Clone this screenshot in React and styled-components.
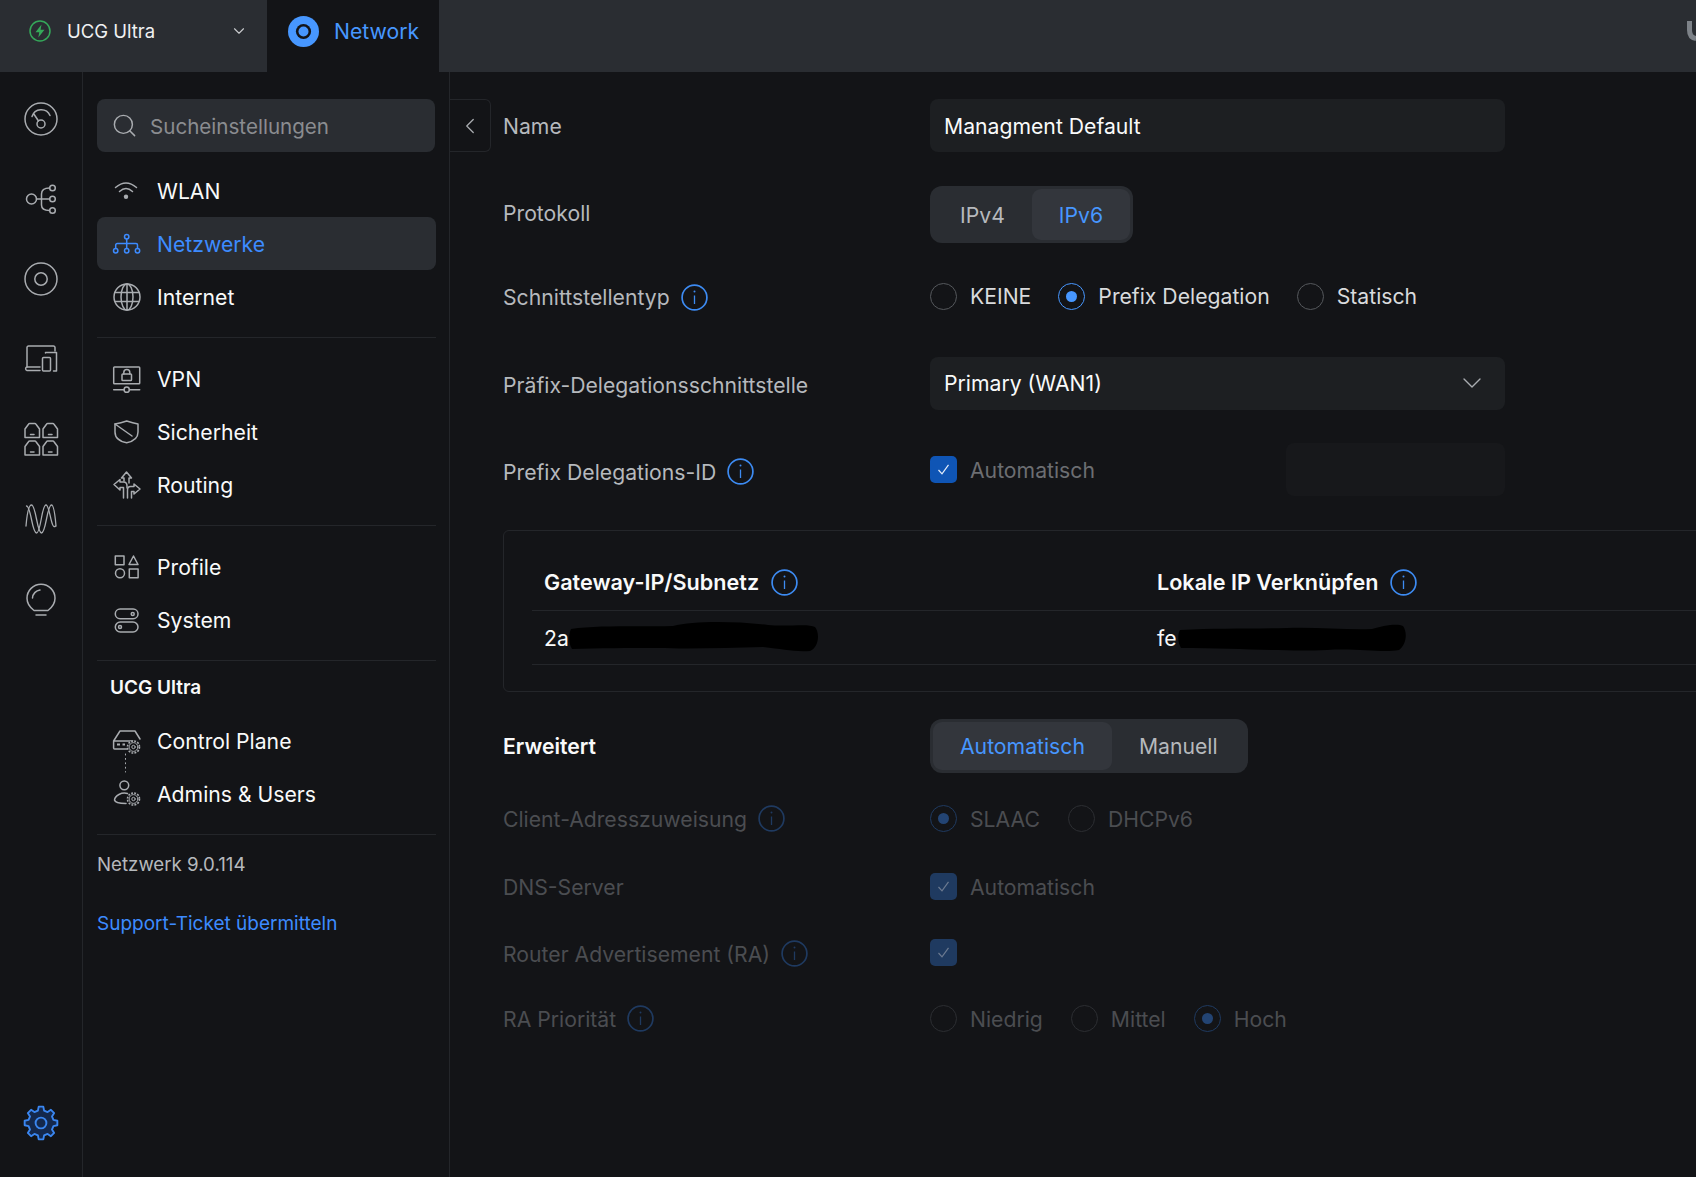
import React from "react";
import styled, { createGlobalStyle } from "styled-components";
import { ChevronDown, ChevronLeft, Search } from "lucide-react";

const GlobalStyle = createGlobalStyle`
  html, body {
    margin: 0;
    background: #131417;
  }
  * {
    box-sizing: border-box;
  }
`;

const blue = "#4797ff";

const Page = styled.div`
  display: flex;
  flex-direction: column;
  width: 1696px;
  height: 1177px;
  overflow: hidden;
  background: #131417;
  color: #f9fafa;
  font-family: Inter, "Noto Sans", sans-serif;
  font-size: 21.2px;
`;

/* top bar */
const TopBar = styled.header`
  display: flex;
  flex: none;
  height: 72px;
  background: #2a2d32;
`;

const DeviceSwitcher = styled.div`
  display: flex;
  align-items: center;
  width: 267px;
  padding: 0 19px 10px 29px;
  gap: 16px;
  font-size: 18.5px;
  color: #f0f1f2;
`;

const DeviceName = styled.span`
  flex: 1;
`;

const AppTab = styled.div`
  display: flex;
  align-items: center;
  width: 172px;
  padding: 0 0 10px 21px;
  gap: 15px;
  background: #131417;
  color: ${blue};
  font-size: 21.2px;
`;

const TopFill = styled.div`
  display: flex;
  flex: 1;
  justify-content: flex-end;
`;

const LogoClip = styled.svg`
  margin-top: 18px;
`;

/* page body */
const Body = styled.div`
  display: flex;
  flex: 1;
  min-height: 0;
`;

const Rail = styled.nav`
  display: flex;
  flex: none;
  flex-direction: column;
  align-items: center;
  width: 83px;
  padding: 30px 0 36px;
  gap: 46px;
  border-right: 1px solid #24262a;
  color: #a9acb0;
`;

const RailSpacer = styled.div`
  flex: 1;
`;

const Sidebar = styled.aside`
  flex: none;
  width: 367px;
  padding: 27px 13px 0 14px;
  border-right: 1px solid #24262a;
`;

const SearchBox = styled.div`
  display: flex;
  align-items: center;
  height: 53px;
  margin: 0 1px 12px 0;
  padding-left: 14px;
  gap: 12px;
  border-radius: 8px;
  background: #2a2d32;
  color: #a9acb0;
`;

const SearchText = styled.span`
  padding-top: 2px;
  font-size: 20.6px;
  color: #8a8c90;
`;

const NavRow = styled.div`
  display: flex;
  align-items: center;
  height: 53px;
  padding-left: 16px;
  gap: 16px;
  border-radius: 8px;
  background: ${(p) => (p.$active ? "#2a2d32" : "transparent")};
  color: ${(p) => (p.$active ? "#3d8bff" : "#a9acb0")};
`;

const NavLabel = styled.span`
  padding-top: 1px;
  color: ${(p) => (p.$active ? "#3d8bff" : "#f9fafa")};
`;

const NavSvg = styled.svg`
  flex: none;
  overflow: visible;
`;

const Divider = styled.div`
  height: 1px;
  margin: 14px 0;
  background: #24262a;
`;

const GroupHeading = styled.div`
  display: flex;
  align-items: center;
  height: 53px;
  margin-top: -14px;
  padding-left: 13px;
  font-size: 19px;
  font-weight: 600;
`;

const Version = styled.div`
  margin-top: -14px;
  padding: 18px 0 17px;
  font-size: 18.7px;
  line-height: 24px;
  color: #b6b9bd;
`;

const SupportLink = styled.a`
  display: block;
  padding-top: 18px;
  font-size: 19px;
  line-height: 24px;
  color: #3d8bff;
`;

/* main form */
const Main = styled.main`
  position: relative;
  flex: 1;
  min-width: 0;
  padding: 27px 0 0 53px;
  overflow: hidden;
`;

const CollapseButton = styled.div`
  position: absolute;
  top: 27px;
  left: 0;
  display: flex;
  align-items: center;
  justify-content: center;
  width: 41px;
  height: 53px;
  border: 1px solid #24262a;
  border-left: 0;
  border-radius: 0 6px 6px 0;
  color: #a9acb0;
`;

const FormRow = styled.div`
  display: grid;
  grid-template-columns: 427px 1fr;
  align-items: center;
  height: ${(p) => p.$h}px;
  margin-top: ${(p) => p.$mt || 0}px;
`;

const Label = styled.div`
  display: flex;
  align-items: center;
  gap: 11px;
  padding-top: ${(p) => Math.max(p.$dy || 0, 0) * 2}px;
  padding-bottom: ${(p) => Math.max(-(p.$dy || 0), 0) * 2}px;
  font-weight: ${(p) => (p.$strong ? 600 : 400)};
  color: ${(p) =>
    p.$strong ? "#f9fafa" : p.$disabled ? "#4b4d51" : "#b6b9bd"};
`;

const InfoSvg = styled.svg`
  flex: none;
  color: ${(p) => (p.$disabled ? "#1f3a60" : "#3d8bf2")};
`;

const TextInput = styled.div`
  display: flex;
  align-items: center;
  justify-content: space-between;
  width: ${(p) => p.$w || 575}px;
  height: 53px;
  padding: 0 17px 0 14px;
  border-radius: 8px;
  background: ${(p) => (p.$faded ? "#17181b" : "#1d1f22")};
  color: #f9fafa;
`;

const Segmented = styled.div`
  display: inline-flex;
  justify-self: start;
  height: ${(p) => p.$h}px;
  padding: 3px;
  border-radius: 12px;
  background: #2a2d32;
`;

const Segment = styled.div`
  display: flex;
  align-items: center;
  padding: 0 27px;
  border-radius: 9px;
  background: ${(p) => (p.$active ? "#33363c" : "transparent")};
  color: ${(p) => (p.$active ? blue : "#b6b9bd")};
`;

const OptionRow = styled.div`
  display: flex;
  align-items: center;
  gap: ${(p) => p.$gap || 28}px;
`;

const Option = styled.div`
  display: flex;
  align-items: center;
  gap: 13px;
  color: ${(p) =>
    p.$disabled ? "#4b4d51" : p.$muted ? "#6c6e72" : "#d9dbdd"};
`;

const RadioDot = styled.span`
  display: flex;
  flex: none;
  align-items: center;
  justify-content: center;
  width: 27px;
  height: 27px;
  border: 1.5px solid
    ${(p) => {
      if (p.$disabled) return p.$on ? "#1f3a60" : "#2c2e32";
      return p.$on ? blue : "#55585c";
    }};
  border-radius: 50%;

  &::after {
    content: "";
    display: ${(p) => (p.$on ? "block" : "none")};
    width: 11px;
    height: 11px;
    border-radius: 50%;
    background: ${(p) => (p.$disabled ? "#234473" : blue)};
  }
`;

const CheckBox = styled.span`
  display: flex;
  flex: none;
  align-items: center;
  justify-content: center;
  width: 27px;
  height: 27px;
  border-radius: 5px;
  background: ${(p) => (p.$disabled ? "#1f3a60" : "#0f55b5")};
  color: ${(p) => (p.$disabled ? "#6c7a90" : "#e6eefb")};
`;

const SplitControl = styled.div`
  display: flex;
  align-items: center;
  justify-content: space-between;
  width: 575px;
`;

const Panel = styled.section`
  height: 162px;
  margin: 34px -30px 0 0;
  padding: 26px 0 0 28px;
  border: 1px solid #24262a;
  border-radius: 6px;
`;

const TableRow = styled.div`
  display: grid;
  grid-template-columns: 613px 1fr;
  align-items: center;
  height: 54px;
  padding-left: 12px;
  border-bottom: 1px solid #24262a;
`;

const HeadCell = styled.div`
  display: flex;
  align-items: center;
  gap: 12px;
  padding-bottom: 3px;
  font-size: 21.6px;
  font-weight: 600;
`;

const ValueCell = styled.div`
  position: relative;
`;

const Redaction = styled.svg`
  position: absolute;
  top: -4px;
  left: ${(p) => p.$left}px;
`;

/* icon drawings */
const Line = ({ size = 34, children, ...rest }) => (
  <NavSvg
    width={size}
    height={size}
    viewBox={`0 0 ${size} ${size}`}
    fill="none"
    stroke="currentColor"
    strokeWidth="1.5"
    strokeLinecap="round"
    strokeLinejoin="round"
    {...rest}
  >
    {children}
  </NavSvg>
);

const MiniGear = ({ x, y }) => (
  <g>
    <circle cx={x} cy={y} r="6.4" fill="#131417" stroke="none" />
    <circle cx={x} cy={y} r="6" strokeDasharray="1.9 1.24" strokeWidth="1.6" strokeLinecap="butt" />
    <circle cx={x} cy={y} r="4.4" strokeWidth="1" />
    <circle cx={x} cy={y} r="1.7" strokeWidth="1" />
  </g>
);

// eight-tooth gear outline, centred on 18,18
const gearPath = Array.from({ length: 8 }, (_, i) => {
  const at = (deg, r) => {
    const a = ((i * 45 + deg - 90) * Math.PI) / 180;
    return `${(18 + r * Math.cos(a)).toFixed(2)} ${(18 + r * Math.sin(a)).toFixed(2)}`;
  };
  return `${i ? "L" : "M"}${at(-14, 12.8)}L${at(-8, 16.5)}L${at(8, 16.5)}L${at(14, 12.8)}`;
}).join("") + "Z";

const GearIcon = () => (
  <svg width="36" height="36" viewBox="0 0 36 36" fill="none" stroke="#3a86f0" strokeWidth="1.9" strokeLinejoin="round">
    <path d={gearPath} fill="#14284c" />
    <circle cx="18" cy="18" r="5.4" />
  </svg>
);

const railIcons = [
  <Line key="dash">
    <circle cx="17" cy="17" r="16" />
    <circle cx="17" cy="22" r="4" />
    <path d="M8 14.5A9.6 9.6 0 0 1 26 13.5M14.5 19L9.5 11.5" />
  </Line>,
  <Line key="topo">
    <circle cx="7.5" cy="17" r="5" />
    <path d="M12.5 17H25.5M25.5 6C20 6 17.5 7.5 17.5 12V23C17.5 27 20 28.5 25.5 28.5" />
    <circle cx="28.5" cy="6" r="2.8" />
    <circle cx="28.5" cy="17" r="2.8" />
    <circle cx="28.5" cy="28.5" r="2.8" />
  </Line>,
  <Line key="target">
    <circle cx="17" cy="17" r="16" />
    <circle cx="17" cy="17" r="6.2" />
  </Line>,
  <Line key="devices">
    <path d="M3 25V5.5A1.5 1.5 0 0 1 4.5 4H29.5A1.5 1.5 0 0 1 31 5.5V9" />
    <path d="M16 28.5H3A1.8 1.8 0 0 1 3 25H16" />
    <rect x="18.5" y="15.5" width="8" height="13.5" rx="1" />
    <path d="M21.5 11V10.5H32.5V29H29.5" />
  </Line>,
  <Line key="racks">
    {[
      [1, 1],
      [19, 1],
      [1, 18.5],
      [19, 18.5],
    ].map(([x, y]) => (
      <g key={`${x}-${y}`} transform={`translate(${x} ${y})`}>
        <path d="M0 14.5V6L3.5 1.2A1.5 1.5 0 0 1 5 .5H9.5A1.5 1.5 0 0 1 11 1.2L14.5 6V14.5Z" />
        <path d="M5.5 11.5H9" />
      </g>
    ))}
  </Line>,
  <Line key="waves" strokeWidth="1.3">
    <path d="M2 24C3 12 5 3 7.5 3C12 3 13 31 17.5 31C22 31 23 3 27.5 3C29.5 3 31 12 32 24" />
    <path d="M2.5 4C7 4 8 31 12.5 31C17 31 17.5 3 22 3C26 3 27 29 31.5 24" />
  </Line>,
  <Line key="bulb">
    <path d="M10 28.5C6 25.5 3 21 3 16.3A14 14 0 0 1 31 16.3C31 21 28 25.5 24 28.5Z" />
    <path d="M8.5 16A8.5 8.5 0 0 1 16 8M12 33H22" />
  </Line>,
];

const navIcons = {
  wifi: (
    <Line size={28}>
      <path d="M2.5 10.5Q13 1.5 23.5 10.5M6.5 14.5Q13 8.5 19.5 14.5" />
      <circle cx="13" cy="19.7" r="2.2" fill="currentColor" stroke="none" />
    </Line>
  ),
  network: (
    <Line size={28}>
      <circle cx="13.7" cy="6.7" r="2.2" />
      <circle cx="2.7" cy="20.7" r="2.2" />
      <circle cx="13.7" cy="20.7" r="2.2" />
      <circle cx="24.5" cy="20.7" r="2.2" />
      <path d="M13.7 9V18.5M2.7 18.5V15A1.5 1.5 0 0 1 4.2 13.5H23A1.5 1.5 0 0 1 24.5 15V18.5" />
    </Line>
  ),
  globe: (
    <Line size={28}>
      <circle cx="14" cy="14" r="13" />
      <ellipse cx="14" cy="14" rx="6" ry="13" />
      <path d="M14 1V27M2.5 9.5H25.5M2.5 18.5H25.5" />
    </Line>
  ),
  vpn: (
    <Line size={28}>
      <rect x="0.7" y="2" width="26" height="16.7" rx="0.8" />
      <rect x="9" y="9" width="9.5" height="6.5" rx="0.8" />
      <path d="M10.8 9V7.5A3 3 0 0 1 16.8 7.5V9M0.7 24.7H11M16.5 24.7H26.7" />
      <circle cx="13.7" cy="24.7" r="2.6" />
    </Line>
  ),
  shield: (
    <Line size={28}>
      <path d="M2 6Q8 5 13.7 3Q20 5 25 6V14C25 20 20 23.5 13.7 24.7C7 23.5 2 20 2 14Z" />
      <path d="M2 6L19 18" />
    </Line>
  ),
  routing: (
    <Line size={28}>
      <path d="M11 10V7H8.5L13.5 1L18.5 7H16V12" />
      <path d="M10.5 27V16.5H7V19L1 13.5L7 8.5V11H10.5C13 11 14 12.5 14 15V17" />
      <path d="M14.5 27V19C14.5 17 15.5 15.5 17.5 15.5H21V13L27 18L21 23V20.5H18.5V27" />
    </Line>
  ),
  profile: (
    <Line size={28}>
      <rect x="2.3" y="3" width="8.7" height="8.7" />
      <path d="M20.5 3L25 11.5H16Z" />
      <circle cx="7" cy="20.2" r="4.5" />
      <rect x="16.3" y="16" width="8.8" height="8.8" />
    </Line>
  ),
  system: (
    <Line size={28}>
      <rect x="2.3" y="3" width="22.7" height="9.7" rx="4.8" />
      <rect x="2.3" y="16" width="22.7" height="10" rx="5" />
      <circle cx="19.7" cy="7.9" r="1.5" />
      <circle cx="7" cy="21" r="1.5" />
    </Line>
  ),
  control: (
    <Line size={28}>
      <path d="M7 4H22L27 12M7 4L0.6 14V21A1 1 0 0 0 1.6 22H14M0.6 14H20" />
      <path d="M4 17.5H7M9.5 17.5H12" strokeWidth="2" strokeLinecap="butt" />
      <MiniGear x={20.5} y={20} />
      <path d="M12.5 27V45" strokeWidth="1" strokeDasharray="1 3.4" />
    </Line>
  ),
  admins: (
    <Line size={28}>
      <circle cx="11.3" cy="5.3" r="4.4" />
      <path d="M14.5 13.5C8.5 12 2 15.5 1.5 20C2 22.5 7 23.5 13 23.5" />
      <MiniGear x={20.5} y={19} />
    </Line>
  ),
};

const InfoIcon = ({ disabled }) => (
  <InfoSvg $disabled={disabled} width="27" height="27" viewBox="0 0 27 27" fill="none" stroke="currentColor" strokeWidth="1.7">
    <circle cx="13.5" cy="13.5" r="12.4" />
    <path d="M13.5 11.5V20" strokeWidth="1.3" />
    <circle cx="13.5" cy="7.6" r="1" fill="currentColor" stroke="none" />
  </InfoSvg>
);

const Radio = ({ on, disabled, muted, children }) => (
  <Option $disabled={disabled} $muted={muted}>
    <RadioDot $on={on} $disabled={disabled} />
    {children}
  </Option>
);

const Check = ({ disabled }) => (
  <CheckBox $disabled={disabled}>
    <svg width="17" height="17" viewBox="0 0 17 17" fill="none" stroke="currentColor" strokeWidth="1.2">
      <path d="M3.5 9L7 12.8L13.5 3.8" />
    </svg>
  </CheckBox>
);

const navGroups = [
  [
    ["wifi", "WLAN"],
    ["network", "Netzwerke", true],
    ["globe", "Internet"],
  ],
  [
    ["vpn", "VPN"],
    ["shield", "Sicherheit"],
    ["routing", "Routing"],
  ],
  [
    ["profile", "Profile"],
    ["system", "System"],
  ],
];

const NavItem = ({ icon, label, active }) => (
  <NavRow $active={active}>
    {navIcons[icon]}
    <NavLabel $active={active}>{label}</NavLabel>
  </NavRow>
);

export default function App() {
  return (
    <Page>
      <GlobalStyle />
      <TopBar>
        <DeviceSwitcher>
          <svg width="22" height="22" viewBox="0 0 22 22" fill="none">
            <circle cx="11" cy="11" r="10" stroke="#35a85a" strokeWidth="1.5" />
            <path d="M12.5 4.5L6.5 12.3H10.3L9.3 17.5L15.5 9.7H11.6Z" fill="#35a85a" />
          </svg>
          <DeviceName>UCG Ultra</DeviceName>
          <ChevronDown size={18} strokeWidth={1.5} color="#c8cacd" />
        </DeviceSwitcher>
        <AppTab>
          <svg width="31" height="31" viewBox="0 0 31 31">
            <circle cx="15.5" cy="15.5" r="15.5" fill={blue} />
            <circle cx="15.5" cy="15.5" r="7.6" fill="#131417" />
            <circle cx="15.5" cy="15.5" r="5" fill={blue} />
          </svg>
          Network
        </AppTab>
        <TopFill>
          <LogoClip width="9" height="26" viewBox="0 0 9 26" fill="none">
            <path d="M2.5 3V12C2.5 17.5 5 20 9 20.5" stroke="#7d8288" strokeWidth="5" />
          </LogoClip>
        </TopFill>
      </TopBar>

      <Body>
        <Rail>
          {railIcons}
          <RailSpacer />
          <GearIcon />
        </Rail>

        <Sidebar>
          <SearchBox>
            <Search size={27} strokeWidth={1.3} />
            <SearchText>Sucheinstellungen</SearchText>
          </SearchBox>
          {navGroups.map((group, i) => (
            <React.Fragment key={i}>
              {group.map(([icon, label, active]) => (
                <NavItem key={label} icon={icon} label={label} active={active} />
              ))}
              <Divider />
            </React.Fragment>
          ))}
          <GroupHeading>UCG Ultra</GroupHeading>
          <NavItem icon="control" label="Control Plane" />
          <NavItem icon="admins" label="Admins & Users" />
          <Divider />
          <Version>Netzwerk 9.0.114</Version>
          <SupportLink>Support-Ticket übermitteln</SupportLink>
        </Sidebar>

        <Main>
          <CollapseButton>
            <ChevronLeft size={26} strokeWidth={1.2} />
          </CollapseButton>

          <FormRow $h={53}>
            <Label>Name</Label>
            <TextInput>Managment Default</TextInput>
          </FormRow>

          <FormRow $h={57} $mt={34}>
            <Label $dy={-2}>Protokoll</Label>
            <Segmented $h={57}>
              <Segment>IPv4</Segment>
              <Segment $active>IPv6</Segment>
            </Segmented>
          </FormRow>

          <FormRow $h={40} $mt={33}>
            <Label $dy={1}>
              Schnittstellentyp <InfoIcon />
            </Label>
            <OptionRow $gap={27}>
              <Radio>KEINE</Radio>
              <Radio on>Prefix Delegation</Radio>
              <Radio>Statisch</Radio>
            </OptionRow>
          </FormRow>

          <FormRow $h={54} $mt={40}>
            <Label $dy={2}>Präfix-Delegationsschnittstelle</Label>
            <TextInput>
              Primary (WAN1)
              <ChevronDown size={32} strokeWidth={1} color="#a9acb0" />
            </TextInput>
          </FormRow>

          <FormRow $h={53} $mt={33}>
            <Label $dy={2}>
              Prefix Delegations-ID <InfoIcon />
            </Label>
            <SplitControl>
              <Option $muted>
                <Check />
                Automatisch
              </Option>
              <TextInput $w={219} $faded />
            </SplitControl>
          </FormRow>

          <Panel>
            <TableRow>
              <HeadCell>
                Gateway-IP/Subnetz <InfoIcon />
              </HeadCell>
              <HeadCell>
                Lokale IP Verknüpfen <InfoIcon />
              </HeadCell>
            </TableRow>
            <TableRow>
              <ValueCell>
                2a
                <Redaction $left={24} width="252" height="32" viewBox="0 0 252 32">
                  <path d="M3 8C30 4 70 6 105 5C125 0 165 0 200 4C220 6 240 2 247 6C252 12 251 26 242 30C225 31 215 28 195 26C160 27 120 28 90 27C60 27 30 27 4 28C0 22 1 12 3 8Z" />
                </Redaction>
              </ValueCell>
              <ValueCell>
                fe
                <Redaction $left={20} width="230" height="32" viewBox="0 0 230 32">
                  <path d="M3 9C40 7 70 8 110 7C140 6 170 9 195 8C205 5 220 2 226 5C231 12 229 24 222 29C205 32 180 27 150 29C110 31 60 27 4 27C0 20 1 12 3 9Z" />
                </Redaction>
              </ValueCell>
            </TableRow>
          </Panel>

          <FormRow $h={54} $mt={27}>
            <Label $strong>Erweitert</Label>
            <Segmented $h={54}>
              <Segment $active>Automatisch</Segment>
              <Segment>Manuell</Segment>
            </Segmented>
          </FormRow>

          <FormRow $h={27} $mt={32}>
            <Label $disabled>
              Client-Adresszuweisung <InfoIcon disabled />
            </Label>
            <OptionRow>
              <Radio on disabled>
                SLAAC
              </Radio>
              <Radio disabled>DHCPv6</Radio>
            </OptionRow>
          </FormRow>

          <FormRow $h={27} $mt={41}>
            <Label $disabled>DNS-Server</Label>
            <Option $disabled>
              <Check disabled />
              Automatisch
            </Option>
          </FormRow>

          <FormRow $h={27} $mt={38}>
            <Label $disabled $dy={1}>
              Router Advertisement (RA) <InfoIcon disabled />
            </Label>
            <Option $disabled>
              <Check disabled />
            </Option>
          </FormRow>

          <FormRow $h={27} $mt={40}>
            <Label $disabled>
              RA Priorität <InfoIcon disabled />
            </Label>
            <OptionRow>
              <Radio disabled>Niedrig</Radio>
              <Radio disabled>Mittel</Radio>
              <Radio on disabled>
                Hoch
              </Radio>
            </OptionRow>
          </FormRow>
        </Main>
      </Body>
    </Page>
  );
}
